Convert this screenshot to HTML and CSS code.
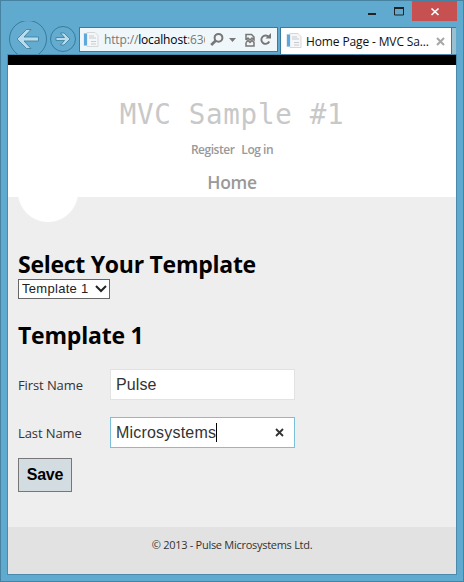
FILE: index.html
```html
<!DOCTYPE html>
<html lang="en">
<head>
<meta charset="utf-8">
<title>Home Page - MVC Sample #1</title>
<link rel="stylesheet" href="styles.css">
</head>
<body>
<div class="window">
  <div class="titlebar">
    <svg class="controls" width="92" height="20" viewBox="0 0 92 20">
      <path d="M36 0h45v20H36z" fill="#c75050"/>
      <path d="M-8 12h8v2h-8z" fill="#222"/>
      <path d="M18.5 7v7h9V7z" fill="none" stroke="#222"/>
      <path d="M18 6h10v2H18z" fill="#222"/>
      <path d="M55.5 7.500l7 6.500M62.500 7.500l-7 6.500" stroke="#fff" stroke-width="1.700"/>
    </svg>
  </div>
  <div class="toolbar">
    <svg class="nav" width="70" height="36" viewBox="0 0 70 36">
      <g fill="#63abcf" stroke="#397b9c"><circle cx="19" cy="20" r="18.500"/><circle cx="54" cy="20" r="12.500"/></g>
      <g fill="#b9dcec" stroke="#397b9c" stroke-width=".8">
        <path d="M8 20l9.500-9.500h4.500l-7 7.500h14.500v4H15l7 7.500h-4.500z"/>
        <path d="M61 20l-6-6h-3.500l4 4.500h-8.500v3h8.500l-4 4.500h3.500z"/>
      </g>
    </svg>
    <div class="address">
      <svg class="page-icon" width="16" height="16" viewBox="0 0 16 16"><path d="M4 .5h8l3 3v11H4z" fill="#f5f6f7" stroke="#d5d8db"/><path d="M0 1h5v13H0z" fill="#e4eef5"/><path d="M1 1.500h3v12H1z" fill="#62a7dc"/><path d="M6 4h5M6 6h7M8 9.500h5M8 12h5" stroke="#c6cbd0"/></svg>
      <span class="url">http://<b>localhost</b>:636</span>
      <svg class="tools" width="64" height="16" viewBox="0 0 64 16" fill="none" stroke="#777">
        <circle cx="9.500" cy="5.800" r="3.900" stroke-width="2"/><path d="M6.600 8.800L2.200 13" stroke-width="2.700"/>
        <path d="M20 6h7l-3.500 4z" fill="#777" stroke="none"/>
        <path d="M37 8V2.500h5.500l2.500 2.500v3l-2-2-2 2-2-2-2 2M37 10.500V14h8v-3.500l-2-2-2 2-2-2-2 2" stroke-width="1.500"/>
        <path d="M59.800 5A4.200 4.200 0 1 0 60.300 9.500" stroke-width="1.900"/><path d="M56.500 6.500H62V1z" fill="#777" stroke="none"/>
      </svg>
    </div>
    <div class="tab">
      <svg class="page-icon" width="16" height="16" viewBox="0 0 16 16"><path d="M4 .5h8l3 3v11H4z" fill="#f5f6f7" stroke="#d5d8db"/><path d="M0 1h5v13H0z" fill="#e4eef5"/><path d="M1 1.500h3v12H1z" fill="#62a7dc"/><path d="M6 4h5M6 6h7M8 9.500h5M8 12h5" stroke="#c6cbd0"/></svg>
      <span class="tab-title">Home Page - MVC Sa...</span>
      <svg class="tab-close" width="9" height="9" viewBox="0 0 9 9"><path d="M1 1l7 7M8 1l-7 7" stroke="#a7a7a7" stroke-width="2"/></svg>
    </div>
    <div class="new-tab"></div>
  </div>
  <div class="page">
    <header>
      <h1><span>MVC Sample #1</span></h1>
      <div class="account"><a>Register</a><a>Log in</a></div>
      <nav><a>Home</a></nav>
    </header>
    <main>
      <div class="bump"></div>
      <h2><span class="select-title">Select Your Template</span></h2>
      <div class="select"><span>Template 1</span><svg width="12" height="8" viewBox="0 0 12 8"><path d="M1 1l5 5 5-5" fill="none" stroke="#222" stroke-width="2"/></svg></div>
      <h2 class="second"><span class="template-title">Template 1</span></h2>
      <div class="field"><label>First Name</label><div class="input"><span class="pulse">Pulse</span></div></div>
      <div class="field"><label>Last Name</label><div class="input focus"><span class="micro">Microsystems</span><i></i><svg width="9" height="9" viewBox="0 0 9 9"><path d="M1 1l7 7M8 1l-7 7" stroke="#333" stroke-width="1.800"/></svg></div></div>
      <div class="save"><span>Save</span></div>
    </main>
    <footer><span>© 2013 - Pulse Microsystems Ltd.</span></footer>
  </div>
</div>
</body>
</html>
```
FILE: styles.css
```css
* { box-sizing: border-box; }
body { margin: 0; font-family: "Open Sans", "Noto Sans", sans-serif; }
h1, h2 { margin: 0; }
svg { display: block; flex: none; }
span, a, label { white-space: nowrap; }
.window { width: 464px; height: 582px; background: #60aacf; border: 1px solid #4783a0; display: flex; flex-direction: column; }
.titlebar { height: 20px; display: flex; justify-content: flex-end; padding-right: 6px; }
.controls { overflow: visible; margin-right: -11px; }
.toolbar { height: 33px; display: flex; padding: 0 6px 0 8px; overflow: hidden; }
.nav { margin-top: -2px; }
.address { width: 199px; height: 25px; margin-top: 6px; border: 1px solid #397b9c; background: #f0f7fa; display: flex; align-items: center; padding-left: 3px; }
.url { width: 101px; margin-left: 5px; overflow: hidden; font-size: 12px; line-height: 20px; color: #777; letter-spacing: -.15px; }
.url b { font-weight: 400; color: #000; }
.tools { margin-left: 4px; }
.tab { width: 172px; height: 27px; margin: 6px 0 0 2px; border: 1px solid #397b9c; border-bottom: 0; background: #fff; display: flex; align-items: center; padding-left: 5px; }
.tab-title { width: 124px; margin-left: 4px; font-size: 12px; color: #111; letter-spacing: -.13px; }
.tab-close { margin-left: 6px; }
.new-tab { width: 4px; height: 27px; margin-top: 6px; background: #9bbfce; border-top: 1px solid #397b9c; }
.page { width: 450px; height: 521px; margin-left: 6px; border: 1px solid #4a8bad; display: flex; flex-direction: column; }
header { height: 142px; background: #fff; border-top: 10px solid #000; display: flex; flex-direction: column; align-items: center; }
h1 { height: 40px; margin-top: 29px; font: 400 27.5px/40px "DejaVu Sans Mono", monospace; color: #c8c8c8; letter-spacing: .7px; }
.account { display: flex; gap: 7px; margin-top: 6px; font-size: 12px; line-height: 20px; font-weight: 600; color: #999; letter-spacing: -.48px; }
nav { margin-top: 9px; font-size: 17.5px; line-height: 26px; font-weight: 600; color: #999; letter-spacing: -.3px; }
main { height: 330px; background: #eee; padding-left: 10px; }
.bump { width: 60px; height: 25px; overflow: hidden; background: radial-gradient(circle at 30px -5px, #fff 29.5px, transparent 30.5px); }
h2 { height: 29px; margin-top: 28px; font-size: 23px; line-height: 28px; font-weight: 700; color: #000; }
.select-title { letter-spacing: -.27px; }
.template-title { letter-spacing: -.22px; }
.select { width: 92px; height: 20px; border: 1px solid #666; background: #fff; display: flex; align-items: center; justify-content: space-between; padding: 0 2px 0 3px; font: 13px/18px "Liberation Sans", sans-serif; color: #222; letter-spacing: .3px; }
h2.second { margin-top: 22px; }
.field { width: 277px; height: 31px; margin-top: 19px; display: flex; justify-content: space-between; font-size: 13px; line-height: 33px; color: #333; letter-spacing: -.1px; }
.field + .field { margin-top: 17px; }
.input { width: 185px; height: 31px; border: 1px solid #e2e2e2; background: #fff; display: flex; align-items: center; padding: 0 10px 0 5px; font: 16px/28px "Liberation Sans", sans-serif; color: #333; letter-spacing: .1px; }
.focus { border-color: #7ac0da; }
.micro { letter-spacing: .2px; }
.input i { width: 1px; height: 19px; background: #000; }
.input svg { margin-left: auto; }
.save { width: 54px; height: 34px; margin-top: 10px; border: 1px solid #777; background: #d3dce0; display: flex; align-items: center; justify-content: center; font: 700 16px/30px "Liberation Sans", sans-serif; color: #000; letter-spacing: -.2px; }
footer { height: 47px; background: #e2e2e2; text-align: center; font-size: 11px; line-height: 36px; color: #333; letter-spacing: -.28px; }
```
